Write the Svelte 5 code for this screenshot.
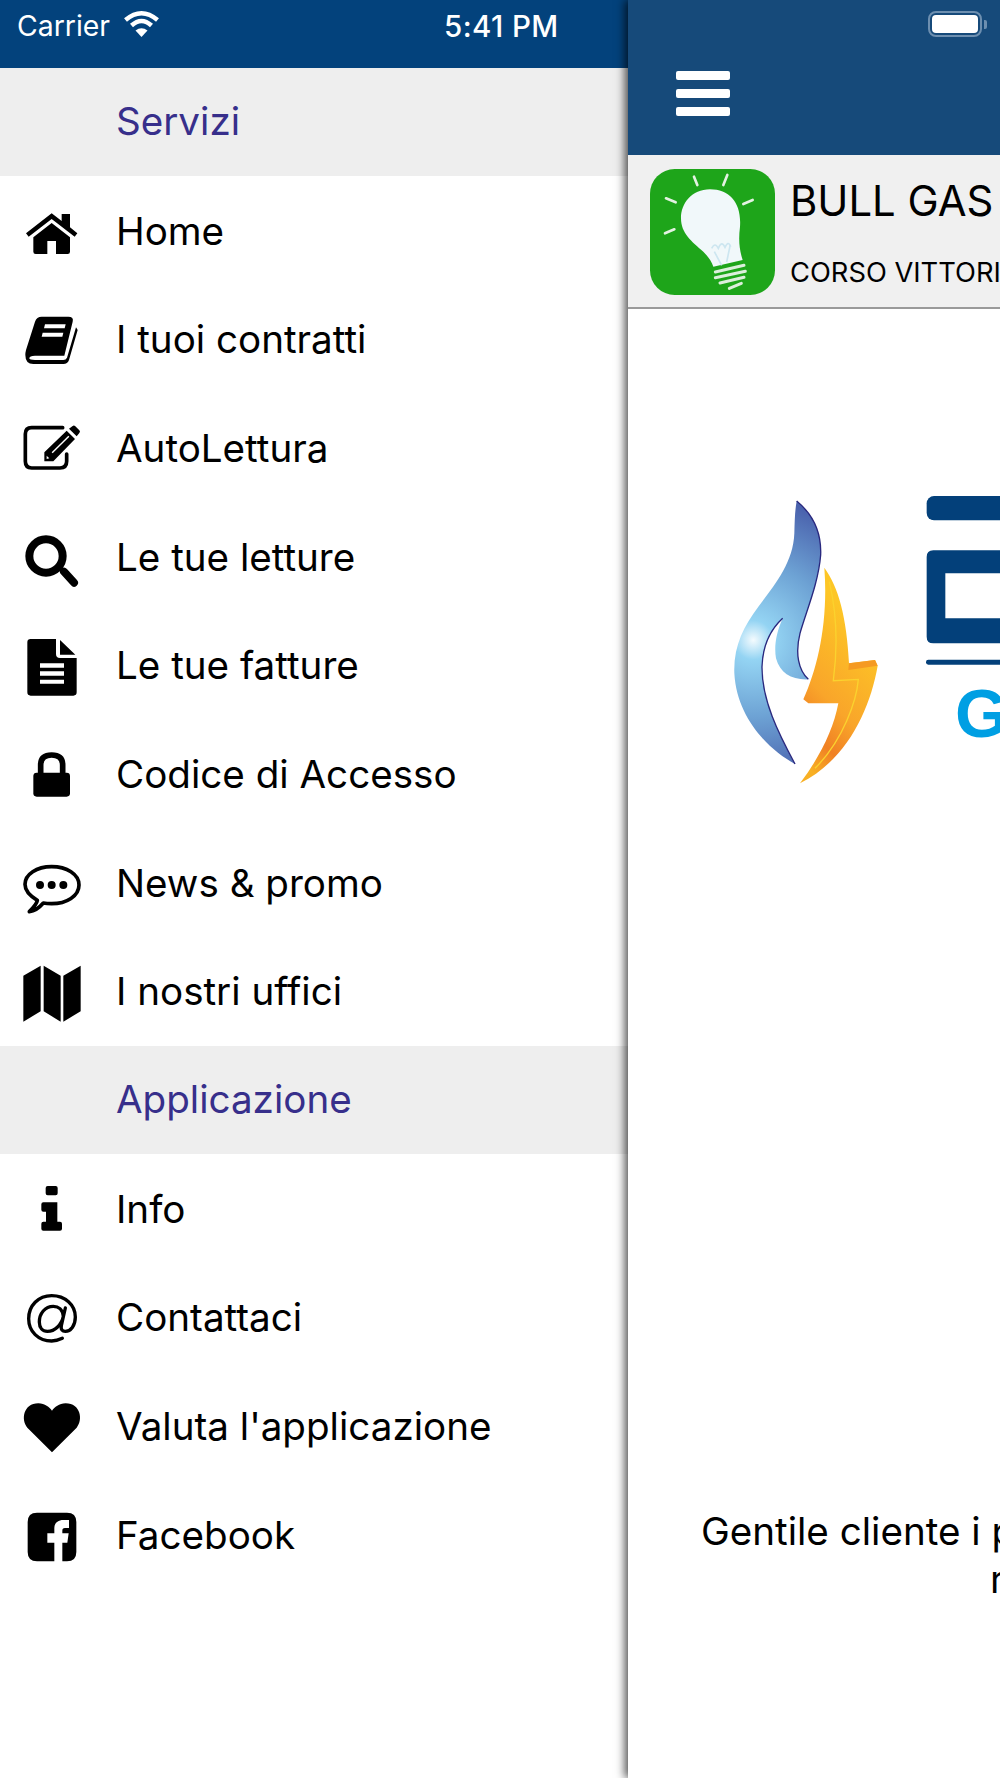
<script>
  const services = [
    {
      label: 'Home',
      vb: '60 22',
      d: 'M78 125 L155 65 L185 88 V67 H210 V107 L232 125 L224 135 L155 82 L86 135 Z M100 137 L155 94 L210 137 V180 Q210 187 203 187 H168 V148 H142 V187 H107 Q100 187 100 180 Z'
    },
    {
      label: 'I tuoi contratti',
      vb: '60 351',
      d: 'M125 380 H205 Q222 380 218 395 L193 497 H105 Q88 497 88 505 Q88 510 105 510 H190 Q198 510 201 503 L228 412 L233 420 L207 510 Q203 522 190 522 H100 Q76 522 76 495 Q76 488 78 480 L105 395 Q110 380 125 380 Z M135 403 H197 L194 415 H132 Z M128 428 H190 L187 440 H125 Z'
    },
    {
      label: 'AutoLettura',
      vb: '60 676',
      d: 'M207 714 L218 706 Q222 703 226 707 L238 719 Q242 723 238 727 L230 737 Z M200 720 L225 745 L160 812 H133 V785 Z M155 785 L205 735 L208 738 L158 788 Z M140 795 L148 803 L140 805 Z',
      stroke: 'M188 711 H95 Q76 711 76 730 V812 Q76 832 95 832 H180 Q200 832 200 812 V790',
      sw: 11
    },
    {
      label: 'Le tue letture',
      vb: '60 1002',
      d: '',
      stroke: 'M88 1095 a50 50 0 1 0 100 0 a50 50 0 1 0 -100 0 Z M192 1142 L222 1175',
      sw: 24
    },
    {
      label: 'Le tue fatture',
      vb: '60 37',
      d: 'M90 55 H168 V100 Q168 112 180 112 H230 V215 Q230 225 220 225 H92 Q82 225 82 215 V65 Q82 55 92 55 Z M180 58 L226 102 H180 Z M120 128 H192 V141 H120 Z M120 152 H192 V165 H120 Z M120 177 H192 V189 H120 Z'
    },
    {
      label: 'Codice di Accesso',
      vb: '60 363',
      d: 'M110 455 H200 Q210 455 210 465 V517 Q210 527 200 527 H110 Q100 527 100 517 V465 Q100 455 110 455 Z',
      stroke: 'M122 458 V432 Q122 402 155 402 Q188 402 188 432 V458',
      sw: 17
    },
    {
      label: 'News & promo',
      vb: '60 690',
      d: 'M108 792 a12 12 0 1 0 24 0 a12 12 0 1 0 -24 0 Z M143 792 a12 12 0 1 0 24 0 a12 12 0 1 0 -24 0 Z M178 792 a12 12 0 1 0 24 0 a12 12 0 1 0 -24 0 Z',
      stroke: 'M112 838 C90 825 75 810 75 790 C75 760 110 737 155 737 C200 737 237 760 237 792 C237 825 200 848 155 848 C145 848 135 847 130 846 C118 860 105 870 88 872 C100 860 110 850 112 838 Z',
      sw: 11
    },
    {
      label: 'I nostri uffici',
      vb: '60 1015',
      d: 'M70 1065 L122 1035 V1172 L70 1203 Z M131 1035 L182 1065 V1203 L131 1172 Z M190 1065 L242 1035 V1172 L190 1203 Z'
    }
  ];

  const app = [
    {
      label: 'Info',
      vb: '60 51',
      d: 'M143 78 H167 Q173 78 173 84 V100 Q173 106 167 106 H143 Q137 106 137 100 V84 Q137 78 143 78 Z M130 127 H172 V185 H180 Q186 185 186 191 V206 Q186 212 180 212 H130 Q124 212 124 206 V191 Q124 185 130 185 H138 V155 H130 Q124 155 124 149 V133 Q124 127 130 127 Z'
    },
    {
      label: 'Contattaci',
      vb: '60 376',
      d: '',
      stroke: 'M187 536 C175 542 165 544 155 544 C115 544 86 515 86 477 C86 438 115 408 155 408 C195 408 226 435 226 472 C226 498 212 515 196 515 C187 515 182 510 184 498 L196 445 M190 470 C188 450 175 440 160 440 C135 440 118 462 118 487 C118 505 128 515 142 515 C165 515 185 495 190 470 Z',
      sw: 10
    },
    {
      label: "Valuta l'applicazione",
      vb: '60 702',
      d: 'M156 877 L82 803 C62 780 70 730 115 730 C135 730 148 742 156 752 C164 742 177 730 197 730 C242 730 250 780 230 803 Z'
    },
    {
      label: 'Facebook',
      vb: '60 1027',
      d: 'M111 1056 H201 Q229 1056 229 1084 V1174 Q229 1202 201 1202 H111 Q83 1202 83 1174 V1084 Q83 1056 111 1056 Z M163 1202 V1146 H142 V1118 H163 V1102 C163 1088 173 1078 190 1078 H207 V1102 H195 C189 1102 187 1105 187 1110 V1118 H206 L202 1146 H187 V1202 Z'
    }
  ];
</script>

{#snippet row(item)}
  <div class="row">
    <svg class="icon" viewBox="{item.vb} 192 192">
      {#if item.d}<path d={item.d} fill-rule="evenodd" />{/if}
      {#if item.stroke}
        <path d={item.stroke} fill="none" stroke="#000" stroke-width={item.sw} stroke-linecap="round" stroke-linejoin="round" />
      {/if}
    </svg>
    <span>{item.label}</span>
  </div>
{/snippet}

<div class="screen">
  <aside class="menu">
    <div class="status">
      <span class="carrier">Carrier</span>
      <svg class="wifi" viewBox="0 0 37 27">
        <path d="M2.5 10 Q18.5 -3.5 34.5 10" fill="none" stroke="#fff" stroke-width="4.5" />
        <path d="M8.5 15.5 Q18.5 6.5 28.5 15.5" fill="none" stroke="#fff" stroke-width="4.5" />
        <path d="M18.5 27 L12.5 20.5 Q18.5 16 24.5 20.5 Z" fill="#fff" />
      </svg>
      <span class="time">5:41 PM</span>
    </div>

    <div class="band">Servizi</div>
    {#each services as item}
      {@render row(item)}
    {/each}

    <div class="band">Applicazione</div>
    {#each app as item}
      {@render row(item)}
    {/each}
  </aside>

  <main class="panel">
    <header class="topbar">
      <div class="battery">
        <div class="battery-body"><div class="battery-fill"></div></div>
        <div class="battery-cap"></div>
      </div>
      <div class="burger"><i></i><i></i><i></i></div>
    </header>

    <div class="account">
      <svg class="bulb" viewBox="90 507 375 378">
        <rect x="90" y="507" width="375" height="378" rx="74" fill="#1ea51a" />
        <g stroke="#e4f2e2" stroke-width="8" stroke-linecap="round" fill="none">
          <path d="M222 530 L232 555 M322 525 L310 555 M138 595 L167 607 M398 600 L370 612 M135 700 L163 688" />
        </g>
        <g stroke="#dcefdc" stroke-width="9" stroke-linecap="round" fill="none">
          <path d="M286 816 L372 796 M286 833 L376 814 M300 849 L372 832 M328 865 L364 850" />
        </g>
        <path d="M270 568 C215 568 183 610 183 655 C183 700 215 725 250 755 C265 770 275 785 280 800 L368 780 C358 750 355 720 360 680 C365 610 330 568 270 568 Z" fill="#f1f8fa" />
        <path d="M283 755 L305 796 M330 738 L320 786 M275 745 Q285 725 295 745 Q305 720 315 742 Q325 720 332 740" fill="none" stroke="#cde6f0" stroke-width="5" />
      </svg>
      <div class="account-text">
        <div class="account-name">BULL GAS</div>
        <div class="account-addr">CORSO VITTORIO</div>
      </div>
    </div>

    <div class="content">
      <svg class="logo" viewBox="0 0 900 990">
        <defs>
          <radialGradient id="flame" gradientUnits="userSpaceOnUse" cx="160" cy="510" r="420">
            <stop offset="0" stop-color="#f4fbfe" />
            <stop offset="0.14" stop-color="#94d4f3" />
            <stop offset="0.55" stop-color="#6da2d4" />
            <stop offset="1" stop-color="#4a62ad" />
          </radialGradient>
          <linearGradient id="bolt" x1="0.6" y1="0.2" x2="0.3" y2="1">
            <stop offset="0" stop-color="#fdc626" />
            <stop offset="0.55" stop-color="#f9a52a" />
            <stop offset="0.8" stop-color="#f08024" />
            <stop offset="1" stop-color="#f8b024" />
          </linearGradient>
        </defs>
        <path d="M290 93 C335 130 365 180 362 255 C355 340 320 420 300 490 C285 550 295 600 325 628 C275 630 240 610 228 565 C222 530 228 490 248 445 C210 480 188 530 186 590 C185 690 235 790 285 882 C200 835 110 740 103 610 C100 530 130 470 175 410 C220 350 280 280 283 190 C284 150 285 120 290 93 Z" fill="url(#flame)" />
        <path d="M290 93 C335 130 365 180 362 255 C355 340 320 420 300 490 C285 550 295 600 325 628 M248 445 C210 480 188 530 186 590 C185 690 235 790 285 882" fill="none" stroke="#29287e" stroke-width="4" />
        <path d="M373 293 C415 350 440 440 447 580 L525 570 L533 587 C510 720 440 870 300 940 C360 860 400 780 415 700 L325 700 L310 688 C355 590 385 450 373 293 Z" fill="url(#bolt)" />
        <path d="M388 335 C408 420 415 520 400 632 L475 628 C470 690 430 810 345 895" fill="none" stroke="#fbd22e" stroke-width="4" />
        <path d="M447 580 L525 570 L533 587 L445 600 Z" fill="#f59a22" />

        <rect x="680" y="78" width="300" height="73" rx="22" fill="#03407a" />
        <path d="M700 241 H900 V310 H736 V445 H900 V520 H700 Q680 520 680 500 V261 Q680 241 700 241 Z" fill="#03407a" />
        <rect x="678" y="569" width="240" height="15" rx="7" fill="#03407a" />
        <text class="logo-g" x="765" y="802">G</text>
      </svg>
      <p class="notice first">Gentile cliente i prezzi</p>
      <p class="notice second">r</p>
    </div>
  </main>
</div>

<style>
  :global(body) {
    margin: 0;
    background: #fff;
  }

  .screen {
    display: flex;
    width: 1000px;
    height: 1778px;
    overflow: hidden;
    font-family: Inter, "Liberation Sans", sans-serif;
    color: #000;
  }

  .menu {
    width: 628px;
    flex-shrink: 0;
    background: #fff;
  }

  .status {
    height: 67.5px;
    box-sizing: border-box;
    background: #03427c;
    color: #fff;
    display: flex;
    align-items: flex-start;
    padding: 9px 0 0 17px;
    font-size: 28.4px;
    line-height: 34px;
  }

  .wifi {
    width: 37px;
    height: 27px;
    margin: 1px 0 0 13px;
  }

  .time {
    margin-left: 284px;
    font-size: 29.5px;
    font-weight: 500;
    letter-spacing: 0.4px;
  }

  .band {
    height: 108.7px;
    box-sizing: border-box;
    padding-left: 116px;
    background: #eeeeee;
    color: #372f8b;
    font-size: 38.6px;
    line-height: 107px;
  }

  .row {
    height: 108.7px;
    display: flex;
    align-items: center;
    padding-left: 20px;
    gap: 32px;
    font-size: 38.6px;
  }

  .icon {
    width: 64px;
    height: 64px;
    flex-shrink: 0;
  }

  .panel {
    flex: 1;
    min-width: 0;
    position: relative;
    background: #fff;
    box-shadow: -3px 0 9px rgba(0, 0, 0, 0.7);
  }

  .topbar {
    height: 155px;
    background: #164a7a;
    box-sizing: border-box;
    padding: 11px 13px 0 48px;
  }

  .battery {
    display: flex;
    align-items: center;
    justify-content: flex-end;
    gap: 2px;
    height: 26px;
  }

  .battery-body {
    width: 54px;
    height: 26px;
    box-sizing: border-box;
    border: 2px solid #6d8fb0;
    border-radius: 8px;
    padding: 2px;
  }

  .battery-fill {
    height: 100%;
    background: #fff;
    border-radius: 4px;
  }

  .battery-cap {
    width: 3px;
    height: 9px;
    background: #6d8fb0;
    border-radius: 0 2px 2px 0;
  }

  .burger {
    display: flex;
    flex-direction: column;
    gap: 9px;
    width: 54px;
    margin-top: 34px;
  }

  .burger i {
    display: block;
    height: 9px;
    background: #fff;
    border-radius: 2px;
  }

  .account {
    height: 154px;
    box-sizing: border-box;
    background: #f0f0f0;
    border-bottom: 2px solid #9a9a9a;
    display: flex;
    align-items: flex-start;
    padding: 14px 0 0 22px;
    gap: 15px;
    white-space: nowrap;
    overflow: hidden;
  }

  .bulb {
    width: 125px;
    height: 126px;
    flex-shrink: 0;
  }

  .account-name {
    font-size: 41.8px;
    line-height: 48px;
    margin-top: 8px;
  }

  .account-addr {
    font-size: 27.3px;
    line-height: 34px;
    margin-top: 31px;
  }

  .content {
    overflow: hidden;
    white-space: nowrap;
  }

  .logo {
    display: block;
    width: 300px;
    height: 330px;
    margin: 161px 0 0 72px;
  }

  .logo-g {
    font-family: "Liberation Sans", sans-serif;
    font-weight: 700;
    font-size: 205px;
    fill: #009fe3;
  }

  .notice {
    margin: 0;
    font-size: 38.6px;
    line-height: 48px;
  }

  .first {
    margin-top: 707px;
    padding-left: 73px;
  }

  .second {
    padding-left: 362px;
  }
</style>
